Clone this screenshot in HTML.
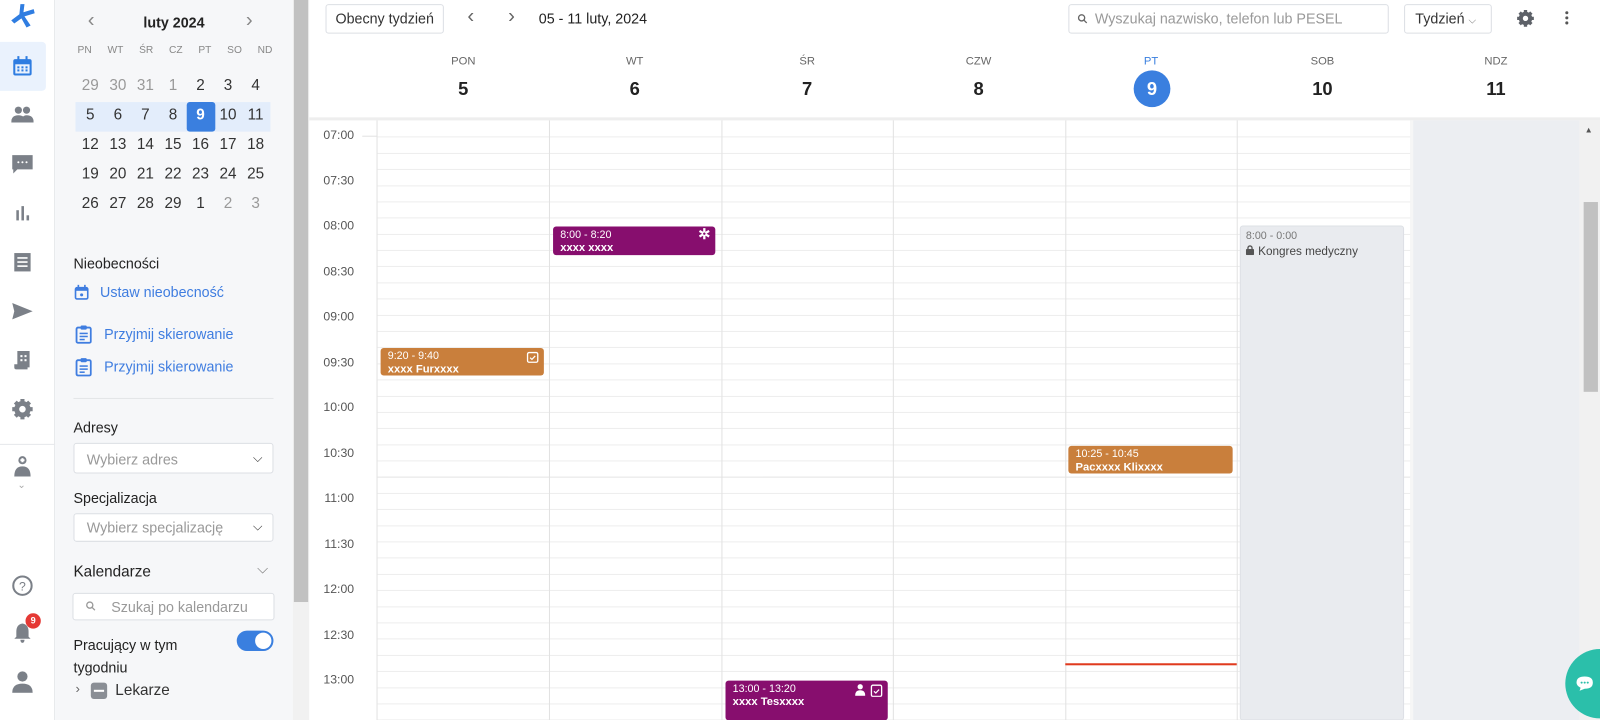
<!DOCTYPE html>
<html><head><meta charset="utf-8"><style>
*{box-sizing:border-box;margin:0;padding:0}
body{width:1600px;height:706px;overflow:hidden;font-family:"Liberation Sans",sans-serif;background:#fff;position:relative;color:#222}
#wrap{position:absolute;left:0;top:0;width:1568px;height:692px;transform:scale(1.0204);transform-origin:0 0}
.a{position:absolute}
#nav{left:0;top:0;width:54px;height:706px;background:#fff;border-right:1px solid #e6e8eb}
#side{left:54px;top:0;width:233px;height:706px;background:#f6f7f9}
#sb{left:287px;top:0;width:16px;height:706px;background:#f1f1f1}
.ni{position:absolute;left:11px;width:22px;height:22px;fill:#7b8088}
.cal td{width:27px;height:29px;text-align:center;font-size:15px;color:#333}
.g{color:#999!important}
.lnk{color:#3f7de0;font-size:15px}
.lbl{font-size:15px;color:#222}
.sel{background:#fff;border:1px solid #dcdfe4;border-radius:3px;color:#999;font-size:15px;padding-left:12px;line-height:30px}
.dh{position:absolute;top:54px;text-align:center;width:168px;font-size:11px;color:#666}
.dn{position:absolute;top:77px;text-align:center;width:168px;font-size:18px;font-weight:bold;color:#222}
.tl{position:absolute;left:305px;width:42px;text-align:right;font-size:12px;color:#555}
.ev{position:absolute;color:#fff;font-size:10.5px;border-radius:3px;padding:2px 0 0 7px;line-height:13px}
.ev b{display:block;font-size:11px}
</style></head><body><div id="wrap">
<div id="nav" class="a">
 <svg class="a" style="left:9px;top:3px" width="26" height="26" viewBox="0 0 26 26"><path d="M11 1 L15 1 L14 9 L24 6 L25 10 L15 13 L21 22 L17 24 L12 15 L5 20 L2 17 L10 11 Z" fill="#2f7de1"/></svg>
 <div class="a" style="left:0;top:41px;width:45px;height:48px;background:#eaf2fd;border-radius:0 4px 4px 0"></div>
 <svg class="ni" style="top:54px" viewBox="0 0 22 22"><rect x="2" y="4" width="18" height="16" rx="2" fill="#2f7de1"/><rect x="4" y="9" width="14" height="9" fill="#eaf2fd"/><rect x="6" y="1" width="2" height="5" fill="#2f7de1"/><rect x="14" y="1" width="2" height="5" fill="#2f7de1"/><g fill="#2f7de1"><rect x="6" y="11" width="2" height="2"/><rect x="10" y="11" width="2" height="2"/><rect x="14" y="11" width="2" height="2"/><rect x="6" y="14" width="2" height="2"/><rect x="10" y="14" width="2" height="2"/><rect x="14" y="14" width="2" height="2"/></g></svg>
 <svg class="ni" style="top:101px" viewBox="0 0 22 22"><circle cx="7" cy="7" r="3.5"/><circle cx="15" cy="7" r="3.5"/><path d="M0 19 Q0 12 7 12 Q14 12 14 19Z M10 19 Q10 12 15 12 Q22 12 22 19Z"/></svg>
 <svg class="ni" style="top:150px" viewBox="0 0 22 22"><path d="M1 2 H21 V16 H6 L2 20 V16 H1Z"/><g fill="#fff"><circle cx="7" cy="9" r="1"/><circle cx="11" cy="9" r="1"/><circle cx="15" cy="9" r="1"/></g></svg>
 <svg class="ni" style="top:197px" viewBox="0 0 22 22"><rect x="5" y="9" width="2.5" height="10"/><rect x="10" y="5" width="2.5" height="14"/><rect x="15" y="14" width="2.5" height="5"/></svg>
 <svg class="ni" style="top:246px" viewBox="0 0 22 22"><rect x="3" y="2" width="16" height="18"/><g fill="#fff"><rect x="6" y="6" width="10" height="1.6"/><rect x="6" y="10" width="10" height="1.6"/><rect x="6" y="14" width="10" height="1.6"/></g></svg>
 <svg class="ni" style="top:294px" viewBox="0 0 22 22"><path d="M1 3 L21 11 L1 19 L3 11Z"/></svg>
 <svg class="ni" style="top:342px" viewBox="0 0 22 22"><path d="M6 2 H18 V18 H6Z M3 15 H16 V20 H5 Q3 20 3 18Z"/><g fill="#fff"><rect x="9" y="6" width="2" height="2"/><rect x="13" y="6" width="2" height="2"/><rect x="9" y="10" width="2" height="2"/><rect x="13" y="10" width="2" height="2"/></g></svg>
 <svg class="ni" style="top:390px" viewBox="0 0 22 22"><circle cx="11" cy="11" r="8"/><g stroke="#7b8088" stroke-width="4"><path d="M11 1V21M1 11H21M4 4L18 18M18 4L4 18"/></g><circle cx="11" cy="11" r="3.2" fill="#fff"/></svg>
 <div class="a" style="left:0;top:435px;width:54px;border-top:1px solid #e6e8eb"></div>
 <svg class="ni" style="top:446px" viewBox="0 0 22 22"><circle cx="11" cy="5" r="4"/><path d="M3 21 Q3 11 11 11 Q19 11 19 21Z"/><rect x="10" y="3" width="2" height="4" fill="#fff"/><rect x="9" y="4" width="4" height="2" fill="#fff"/></svg>
 <div class="a" style="left:17px;top:470px;font-size:10px;color:#aaa">⌄</div>
 <svg class="ni" style="top:563px" viewBox="0 0 22 22"><circle cx="11" cy="11" r="9" fill="none" stroke="#7b8088" stroke-width="2"/><text x="11" y="15.5" font-size="12" text-anchor="middle" fill="#7b8088" font-family="Liberation Sans">?</text></svg>
 <svg class="ni" style="top:609px" viewBox="0 0 22 22"><path d="M11 2 Q17 3 17 10 V15 L19 17 H3 L5 15 V10 Q5 3 11 2Z M9 18 H13 Q13 21 11 21 Q9 21 9 18Z"/></svg>
 <div class="a" style="left:25px;top:601px;width:15px;height:15px;border-radius:50%;background:#e53935;color:#fff;font-size:9px;font-weight:bold;text-align:center;line-height:15px">9</div>
 <svg class="ni" style="top:657px" viewBox="0 0 22 22"><circle cx="11" cy="6" r="5"/><path d="M1 22 Q1 13 11 13 Q21 13 21 22Z"/></svg>
</div>

<div id="side" class="a">
 <div class="a" style="left:32px;top:9px;font-size:20px;color:#888">‹</div>
 <div class="a" style="left:187px;top:9px;font-size:20px;color:#888">›</div>
 <div class="a" style="left:0;width:233px;top:14px;text-align:center;font-size:14px;font-weight:bold;color:#222">luty 2024</div>
 <div class="a" style="left:22px;top:44px;width:191px;display:flex;justify-content:space-between;font-size:10px;color:#888"><span>PN</span><span>WT</span><span>ŚR</span><span>CZ</span><span>PT</span><span>SO</span><span>ND</span></div>
 <div class="a" style="left:20px;top:100px;width:191px;height:29px;background:#e3edfb"></div>
 <div class="a" style="left:129px;top:100px;width:28px;height:29px;background:#3a7fdf;border-radius:3px"></div>
 <table class="a cal" style="left:21px;top:69px;border-collapse:collapse">
 <tr><td class="g">29</td><td class="g">30</td><td class="g">31</td><td class="g">1</td><td>2</td><td>3</td><td>4</td></tr>
 <tr><td>5</td><td>6</td><td>7</td><td>8</td><td style="color:#fff;font-weight:bold">9</td><td>10</td><td>11</td></tr>
 <tr><td>12</td><td>13</td><td>14</td><td>15</td><td>16</td><td>17</td><td>18</td></tr>
 <tr><td>19</td><td>20</td><td>21</td><td>22</td><td>23</td><td>24</td><td>25</td></tr>
 <tr><td>26</td><td>27</td><td>28</td><td>29</td><td>1</td><td class="g">2</td><td class="g">3</td></tr>
 </table>
 <div class="a lbl" style="left:18px;top:250px;font-size:14px">Nieobecności</div>
 <svg class="a" style="left:19px;top:279px" width="14" height="15" viewBox="0 0 14 15"><rect x="1" y="3" width="12" height="11" rx="1.5" fill="none" stroke="#3f7de0" stroke-width="1.6"/><rect x="1" y="3" width="12" height="3" fill="#3f7de0"/><rect x="3" y="0" width="1.6" height="4" fill="#3f7de0"/><rect x="9.4" y="0" width="1.6" height="4" fill="#3f7de0"/><circle cx="7" cy="10" r="1.5" fill="#3f7de0"/></svg>
 <div class="a lnk" style="left:44px;top:278px;font-size:14px">Ustaw nieobecność</div>
 <svg class="a" style="left:20px;top:318px" width="16" height="19" viewBox="0 0 16 19"><rect x="1" y="3" width="14" height="15" rx="1.5" fill="none" stroke="#3f7de0" stroke-width="1.8"/><rect x="5" y="1" width="6" height="4" rx="1" fill="#3f7de0"/><g fill="#3f7de0"><rect x="4" y="8" width="8" height="1.5"/><rect x="4" y="11" width="8" height="1.5"/><rect x="4" y="14" width="5" height="1.5"/></g></svg>
 <div class="a lnk" style="left:48px;top:319px;font-size:14px">Przyjmij skierowanie</div>
 <svg class="a" style="left:20px;top:350px" width="16" height="19" viewBox="0 0 16 19"><rect x="1" y="3" width="14" height="15" rx="1.5" fill="none" stroke="#3f7de0" stroke-width="1.8"/><rect x="5" y="1" width="6" height="4" rx="1" fill="#3f7de0"/><g fill="#3f7de0"><rect x="4" y="8" width="8" height="1.5"/><rect x="4" y="11" width="8" height="1.5"/><rect x="4" y="14" width="5" height="1.5"/></g></svg>
 <div class="a lnk" style="left:48px;top:351px;font-size:14px">Przyjmij skierowanie</div>
 <div class="a" style="left:18px;top:390px;width:196px;border-top:1px solid #e3e5e8"></div>
 <div class="a lbl" style="left:18px;top:411px;font-size:14px">Adresy</div>
 <div class="a sel" style="left:18px;top:434px;width:196px;height:30px;font-size:14px">Wybierz adres<span style="position:absolute;right:10px;top:-1px;color:#333;font-size:12px">⌵</span></div>
 <div class="a lbl" style="left:18px;top:480px;font-size:14px">Specjalizacja</div>
 <div class="a sel" style="left:18px;top:503px;width:196px;height:28px;line-height:27px;font-size:14px">Wybierz specjalizację<span style="position:absolute;right:10px;top:-1px;color:#333;font-size:12px">⌵</span></div>
 <div class="a lbl" style="left:18px;top:552px;font-size:15px">Kalendarze</div>
 <div class="a" style="left:198px;top:549px;font-size:14px;color:#777">⌵</div>
 <div class="a sel" style="left:17px;top:581px;width:198px;height:27px;line-height:26px;padding-left:37px;font-size:14px">Szukaj po kalendarzu</div>
 <svg class="a" style="left:30px;top:589px" width="10" height="10" viewBox="0 0 10 10"><circle cx="4" cy="4" r="3" fill="none" stroke="#999" stroke-width="1.3"/><path d="M6.3 6.3L9 9" stroke="#999" stroke-width="1.3"/></svg>
 <div class="a lbl" style="left:18px;top:621px;font-size:14px;line-height:22px">Pracujący w tym<br>tygodniu</div>
 <div class="a" style="left:178px;top:618px;width:36px;height:20px;border-radius:10px;background:#3a7fdf"><div style="position:absolute;right:2px;top:2px;width:16px;height:16px;border-radius:50%;background:#fff"></div></div>
 <div class="a" style="left:20px;top:667px;font-size:13px;color:#666">›</div>
 <div class="a" style="left:35px;top:669px;width:16px;height:16px;border-radius:3px;background:#8a8e95"><div style="position:absolute;left:3px;top:7px;width:10px;height:2px;background:#fff"></div></div>
 <div class="a" style="left:59px;top:668px;font-size:15px;color:#333">Lekarze</div>
</div>
<div id="sb" class="a"><div class="a" style="left:1px;top:0;width:14px;height:590px;background:#c1c1c1"></div></div>

<!-- top bar -->
<div class="a" style="left:319px;top:4px;width:116px;height:29px;border:1px solid #dcdfe4;border-radius:3px;font-size:14px;text-align:center;line-height:27px;color:#333">Obecny tydzień</div>
<div class="a" style="left:458px;top:5px;font-size:20px;color:#666">‹</div>
<div class="a" style="left:498px;top:5px;font-size:20px;color:#666">›</div>
<div class="a" style="left:528px;top:10px;font-size:14px;color:#222">05 - 11 luty, 2024</div>
<div class="a" style="left:1047px;top:4px;width:314px;height:29px;border:1px solid #dcdfe4;border-radius:3px;font-size:14px;line-height:27px;color:#999;padding-left:25px">Wyszukaj nazwisko, telefon lub PESEL</div>
<svg class="a" style="left:1056px;top:13px" width="10" height="11" viewBox="0 0 10 10"><circle cx="4" cy="4" r="3" fill="none" stroke="#666" stroke-width="1.3"/><path d="M6.3 6.3L9 9" stroke="#666" stroke-width="1.3"/></svg>
<div class="a" style="left:1376px;top:4px;width:86px;height:29px;border:1px solid #dcdfe4;border-radius:3px;font-size:14px;line-height:27px;color:#333;padding-left:10px">Tydzień <span style="font-size:10px;color:#777">⌵</span></div>
<svg class="a" style="left:1486px;top:9px" width="18" height="18" viewBox="0 0 22 22"><circle cx="11" cy="11" r="8" fill="#5d6168"/><g stroke="#5d6168" stroke-width="4"><path d="M11 1V21M1 11H21M4 4L18 18M18 4L4 18"/></g><circle cx="11" cy="11" r="3.2" fill="#fff"/></svg>
<div class="a" style="left:1534px;top:11px;width:3px;line-height:0"><div style="width:3px;height:3px;background:#555;border-radius:50%;margin-bottom:2px"></div><div style="width:3px;height:3px;background:#555;border-radius:50%;margin-bottom:2px"></div><div style="width:3px;height:3px;background:#555;border-radius:50%"></div></div>

<!-- day headers -->
<div class="dh" style="left:370px">PON</div><div class="dn" style="left:370px">5</div>
<div class="dh" style="left:538px">WT</div><div class="dn" style="left:538px">6</div>
<div class="dh" style="left:707px">ŚR</div><div class="dn" style="left:707px">7</div>
<div class="dh" style="left:875px">CZW</div><div class="dn" style="left:875px">8</div>
<div class="dh" style="left:1044px;color:#3a7fdf">PT</div>
<div class="a" style="left:1111px;top:69px;width:36px;height:36px;border-radius:50%;background:#3a7fdf;color:#fff;font-size:18px;font-weight:bold;text-align:center;line-height:36px">9</div>
<div class="dh" style="left:1212px">SOB</div><div class="dn" style="left:1212px">10</div>
<div class="dh" style="left:1382px">NDZ</div><div class="dn" style="left:1382px">11</div>
<div class="a" style="left:303px;top:115px;width:1297px;height:3px;background:#eee"></div>

<!-- grid -->
<div class="a" style="left:370px;top:118px;width:1178px;height:588px;background:repeating-linear-gradient(to bottom,transparent 0,transparent 14.87px,#ededed 14.87px,#ededed 15.87px);background-position:0 1px"></div>
<div class="a" style="left:1382px;top:118px;width:166px;height:588px;background:#eceef2;border-left:3px solid #f6f6f6"></div>
<div class="a" style="left:369px;top:118px;width:1px;height:588px;background:#e2e2e2"></div>
<div class="a" style="left:538px;top:118px;width:1px;height:588px;background:#e2e2e2"></div>
<div class="a" style="left:707px;top:118px;width:1px;height:588px;background:#e2e2e2"></div>
<div class="a" style="left:875px;top:118px;width:1px;height:588px;background:#e2e2e2"></div>
<div class="a" style="left:1044px;top:118px;width:1px;height:588px;background:#e2e2e2"></div>
<div class="a" style="left:1212px;top:118px;width:1px;height:588px;background:#e2e2e2"></div>
<div class="a" style="left:355px;top:133px;width:15px;height:1px;background:#e2e2e2"></div>

<div class="tl" style="top:125px">07:00</div><div class="tl" style="top:170px">07:30</div>
<div class="tl" style="top:214px">08:00</div><div class="tl" style="top:259px">08:30</div>
<div class="tl" style="top:303px">09:00</div><div class="tl" style="top:348px">09:30</div>
<div class="tl" style="top:392px">10:00</div><div class="tl" style="top:437px">10:30</div>
<div class="tl" style="top:481px">11:00</div><div class="tl" style="top:526px">11:30</div>
<div class="tl" style="top:570px">12:00</div><div class="tl" style="top:615px">12:30</div>
<div class="tl" style="top:659px">13:00</div>

<!-- events -->
<div class="a" style="left:1215px;top:221px;width:161px;height:485px;background:#e9ebef;border:1px solid #dde0e5;border-radius:3px;padding:3px 5px;font-size:10.5px;color:#777">8:00 - 0:00<div style="color:#444;font-size:11.5px;margin-top:3px"><svg width="8" height="10" viewBox="0 0 8 10" style="margin-right:4px"><rect x="0" y="4" width="8" height="6" rx="1" fill="#555"/><path d="M2 4.5V3a2 2 0 0 1 4 0v1.5" fill="none" stroke="#555" stroke-width="1.3"/></svg>Kongres medyczny</div></div>
<div class="ev" style="left:542px;top:222px;width:159px;height:28px;background:#870e6e">8:00 - 8:20<b>xxxx xxxx</b><span style="position:absolute;right:5px;top:1px;font-size:14px;font-weight:bold">✲</span></div>
<div class="ev" style="left:373px;top:341px;width:160px;height:27px;background:#c97f3c">9:20 - 9:40<b>xxxx Furxxxx</b><svg style="position:absolute;right:5px;top:3px" width="12" height="12" viewBox="0 0 12 12"><rect x="1" y="1.5" width="10" height="9.5" rx="1.5" fill="none" stroke="#fff" stroke-width="1.3"/><path d="M3.5 6.5L5.3 8.2L8.5 4.8" fill="none" stroke="#fff" stroke-width="1.2"/></svg></div>
<div class="ev" style="left:1047px;top:437px;width:161px;height:27px;background:#c97f3c">10:25 - 10:45<b>Pacxxxx Klixxxx</b></div>
<div class="ev" style="left:711px;top:667px;width:159px;height:39px;background:#870e6e">13:00 - 13:20<b>xxxx Tesxxxx</b><svg style="position:absolute;right:5px;top:3px" width="12" height="13" viewBox="0 0 12 13"><rect x="1" y="1.5" width="10" height="11" rx="1.5" fill="none" stroke="#fff" stroke-width="1.3"/><path d="M3.5 7.5L5.3 9.2L8.5 5.8" fill="none" stroke="#fff" stroke-width="1.2"/></svg><svg style="position:absolute;right:22px;top:3px" width="10" height="12" viewBox="0 0 10 12"><circle cx="5" cy="3" r="2.6" fill="#fff"/><path d="M0 12 Q0 6.5 5 6.5 Q10 6.5 10 12Z" fill="#fff"/></svg></div>
<div class="a" style="left:1044px;top:650px;width:168px;height:2px;background:#e03a1e"></div>

<!-- right scrollbar -->
<div class="a" style="left:1548px;top:118px;width:20px;height:588px;background:#f1f1f1"></div>
<div class="a" style="left:1553px;top:123px;font-size:8px;color:#555">▲</div>
<div class="a" style="left:1552px;top:198px;width:14px;height:186px;background:#c1c1c1"></div>
<div class="a" style="left:1534px;top:636px;width:68px;height:68px;border-radius:50%;background:#2bbfaa"></div>
<svg class="a" style="left:1544px;top:662px" width="18" height="16" viewBox="0 0 18 16"><path d="M9 1 Q17 1 17 7 Q17 13 9 13 L4 15 L5 12 Q1 10 1 7 Q1 1 9 1Z" fill="#fff"/><g fill="#2bbfaa"><circle cx="6" cy="7" r="1"/><circle cx="9" cy="7" r="1"/><circle cx="12" cy="7" r="1"/></g></svg>
</div></body></html>
